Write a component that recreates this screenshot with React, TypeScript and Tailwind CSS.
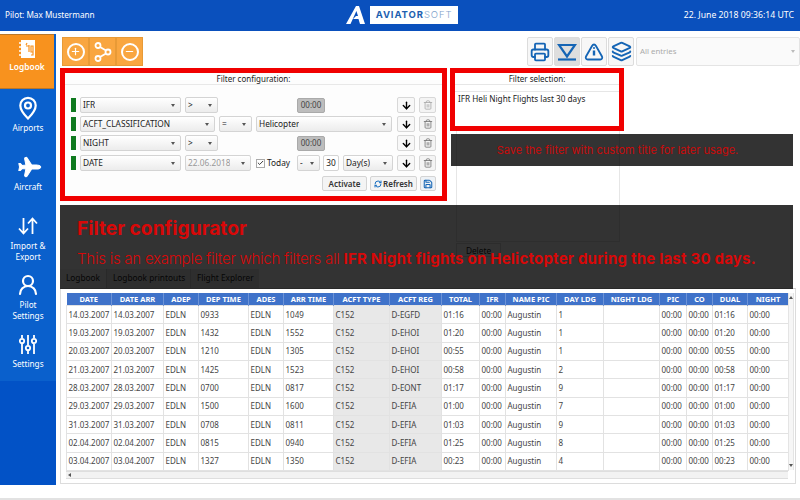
import React from "react";
import { Printer, Layers, Plus, Minus, ArrowDown, Trash2, Save, RefreshCw, Plane, UserRound, Check } from "lucide-react";

const cols: [string, string][] = [
  ["DATE", "w-[45px]"], ["DATE ARR", "w-[52px]"], ["ADEP", "w-[35px]"], ["DEP TIME", "w-[50px]"], ["ADES", "w-[35px]"],
  ["ARR TIME", "w-[50px]"], ["ACFT TYPE", "w-[56px]"], ["ACFT REG", "w-[52px]"], ["TOTAL", "w-[38px]"], ["IFR", "w-[26px]"],
  ["NAME PIC", "w-[51px]"], ["DAY LDG", "w-[47px]"], ["NIGHT LDG", "w-[56px]"], ["PIC", "w-[27px]"], ["CO", "w-[26px]"],
  ["DUAL", "w-[35px]"], ["NIGHT", "w-[41px]"],
];
const rows = [
  ["14.03.2007", "0933", "1049", "D-EGFD", "01:16", "1"],
  ["19.03.2007", "1432", "1552", "D-EHOI", "01:20", "1"],
  ["20.03.2007", "1210", "1305", "D-EHOI", "00:55", "1"],
  ["21.03.2007", "1425", "1523", "D-EHOI", "00:58", "2"],
  ["28.03.2007", "0700", "0817", "D-EONT", "01:17", "9"],
  ["29.03.2007", "1500", "1600", "D-EFIA", "01:00", "7"],
  ["31.03.2007", "0708", "0811", "D-EFIA", "01:03", "9"],
  ["02.04.2007", "0815", "0940", "D-EFIA", "01:25", "8"],
  ["03.04.2007", "1327", "1350", "D-EFIA", "00:23", "4"],
];

function Sel({ w, label, muted }: { w: string; label: string; muted?: boolean }) {
  return (
    <div className={`${w} h-[16px] shrink-0 flex items-center justify-between pl-[2px] pr-[5px] rounded-[2px] border border-[#d4d4d4] bg-gradient-to-b from-white to-[#ececec] text-[8.3px] ${muted ? "text-[#999]" : "text-[#222]"}`}>
      <span className="truncate">{label}</span>
      <span className="w-0 h-0 border-x-[2px] border-x-transparent border-t-[3px] border-t-[#555]" />
    </div>
  );
}
function RowBtns({ last }: { last?: boolean }) {
  return (
    <>
      <div className="w-[18px] h-[16px] shrink-0 ml-auto flex items-center justify-center rounded-[2px] border border-[#d8d8d8] bg-[#f8f8f8]">
        <ArrowDown size={11} strokeWidth={3} className="text-black" />
      </div>
      <div className="w-[17px] h-[16px] shrink-0 flex items-center justify-center rounded-[2px] border border-[#d8d8d8] bg-[#f4f4f4]">
        <Trash2 size={10} className={last ? "text-[#777]" : "text-[#aaa]"} />
      </div>
    </>
  );
}
const Green = () => <div className="w-[5px] h-[14px] bg-[#0f7a1f] shrink-0" />;
const Time = () => (
  <div className="w-[28px] h-[15px] shrink-0 flex items-center justify-center rounded-[2px] border border-[#aaa] bg-[#bdbdbd] text-[8px] text-[#444]">00:00</div>
);

function SideItem({ icon, label }: { icon: React.ReactNode; label: React.ReactNode }) {
  return (
    <div className="h-[59px] flex flex-col items-center justify-start text-white text-[8.2px] leading-[10.5px] text-center">
      <div className="h-[26px] flex items-center justify-center mb-[2px]">{icon}</div>
      {label}
    </div>
  );
}

function OrangeBtn({ children, w }: { children: React.ReactNode; w: string }) {
  return <div className={`${w} h-[29px] flex items-center justify-center bg-[#f9a640] border border-[#e89a36]`}>{children}</div>;
}
function ToolBtn({ children, active }: { children: React.ReactNode; active?: boolean }) {
  return <div className={`w-[26px] h-[29px] flex items-center justify-center rounded-[2px] border border-[#dcdcdc] ${active ? "bg-[#dedede]" : "bg-[#f7f7f7]"}`}>{children}</div>;
}

export default function App() {
  return (
    <div className="relative w-[800px] h-[500px] overflow-hidden bg-white font-['Noto_Sans',sans-serif] text-[#222]">
      <header className="h-[31px] bg-[#0a50bd] relative flex items-center justify-between pl-[5px] pr-[6px] text-white">
        <span className="text-[8.2px]">Pilot: Max Mustermann</span>
        <div className="absolute left-[346px] top-[6px] flex items-center gap-[5px]">
          <svg width="19" height="18" viewBox="0 0 19 18">
            <path d="M10 0h3l6 18h-5l-1.500-5H7l3-3h2l-1.600-5L4.500 18H0z" fill="white" />
          </svg>
          <div className="w-[88px] h-[18px] bg-white flex items-center justify-center text-[9.5px] tracking-[0.900px] font-['Inter',sans-serif] text-[#1d5fb0]">
            <b>AVIATOR</b><span className="font-light text-[#7fa3cc]">SOFT</span>
          </div>
        </div>
        <span className="text-[8.7px]">22. June 2018 09:36:14 UTC</span>
      </header>

      <div className="flex h-[469px]">
        <aside className="w-[56px] mt-[3px] h-[451px] flex flex-col bg-gradient-to-b from-[#0a60cc] from-[77%] to-[#0252c6] to-[77%]">
          <div className="w-[54px] h-[55px] bg-[#f8921e] border-y border-[#b9772a] flex flex-col items-center pt-[4px] text-white text-[8.4px] font-semibold">
            <svg width="18" height="20" viewBox="0 0 18 20" className="mb-[2px]">
              <path d="M3 1h14v18H3z" fill="white" />
              <path d="M1 4h4M1 8h4M1 12h4M1 16h4" stroke="white" strokeWidth="1.500" />
              <path d="M8 6l1-2M8 7h3M11 13V6M13 7h2v6h-2zM13 16h2v-3" stroke="#f8921e" strokeWidth="1.200" fill="none" />
            </svg>
            Logbook
          </div>
          <div className="h-[6px]" />
          <SideItem
            icon={
              <svg width="18" height="24" viewBox="0 0 18 24" fill="none" stroke="white" strokeWidth="2.200">
                <path d="M9 22.500C5 18.500 1.300 14 1.300 9.500a7.700 7.700 0 0 1 15.400 0C16.700 14 13 18.500 9 22.500z" />
                <circle cx="9" cy="9.500" r="3" />
              </svg>
            }
            label="Airports"
          />
          <SideItem icon={<Plane size={24} fill="white" strokeWidth={1} className="rotate-45" />} label="Aircraft" />
          <SideItem
            icon={
              <svg width="20" height="18" viewBox="0 0 20 18" fill="none" stroke="white" strokeWidth="1.800">
                <path d="M5.500 1v15M1 11.500l4.500 5 4.500-5M14.500 17V2M10 6.500l4.500-5 4.500 5" />
              </svg>
            }
            label={<>Import &amp;<br />Export</>}
          />
          <SideItem icon={<UserRound size={24} strokeWidth={2.200} />} label={<>Pilot<br />Settings</>} />
          <SideItem
            icon={
              <svg width="18" height="21" viewBox="0 0 18 21" fill="none" stroke="white" strokeWidth="1.800">
                <path d="M3 1v3M3 10v10M9 1v10M9 17v3M15 1v3M15 10v10" />
                <circle cx="3" cy="7" r="2.200" /><circle cx="9" cy="14" r="2.200" /><circle cx="15" cy="7" r="2.200" />
              </svg>
            }
            label="Settings"
          />
        </aside>

        <main className="flex-1 min-w-0 pl-[4px] flex flex-col relative">
          <div className="flex items-center h-[29px] mt-[6px] pl-[2px]">
            <div className="flex">
              <OrangeBtn w="w-[27px]">
                <div className="w-[18px] h-[18px] rounded-full border-2 border-white flex items-center justify-center"><Plus size={11} strokeWidth={2.500} className="text-white" /></div>
              </OrangeBtn>
              <OrangeBtn w="w-[27px]">
                <svg width="18" height="20" viewBox="0 0 18 20" fill="none" stroke="white" strokeWidth="1.800"><circle cx="4" cy="3.500" r="2.500" /><circle cx="4" cy="16.500" r="2.500" /><circle cx="14" cy="10" r="2.500" /><path d="M6 5l6 3.500M6 15l6-3.500" /></svg>
              </OrangeBtn>
              <OrangeBtn w="w-[27px]">
                <div className="w-[18px] h-[18px] rounded-full border-2 border-white flex items-center justify-center"><Minus size={11} strokeWidth={2.500} className="text-white" /></div>
              </OrangeBtn>
            </div>
            <div className="ml-auto flex gap-[1px]">
              <ToolBtn><Printer size={20} strokeWidth={2.200} className="text-[#1565b5]" /></ToolBtn>
              <ToolBtn active>
                <svg width="20" height="18" viewBox="0 0 20 18" fill="none" stroke="#1565b5" strokeWidth="2.200"><path d="M2 2h16L10 13.500z" /><path d="M1 16.500h18" /></svg>
              </ToolBtn>
              <ToolBtn>
                <svg width="20" height="18" viewBox="0 0 20 18" fill="none" stroke="#1565b5" strokeWidth="1.800"><path d="M10 1.500c1 0 1.500.6 2 1.500l6 10.500c.7 1.500-.1 3-1.700 3H3.700c-1.600 0-2.400-1.500-1.700-3L8 3c.5-.9 1-1.500 2-1.500z" /><path d="M10 7.500v5" strokeWidth="2.400" /><circle cx="10" cy="5" r="1" fill="#1565b5" stroke="none" /></svg>
              </ToolBtn>
              <ToolBtn><Layers size={21} strokeWidth={2.200} className="text-[#1565b5]" /></ToolBtn>
              <div className="w-[164px] h-[29px] ml-[1px] flex items-center justify-between pl-[3px] pr-[4px] border border-[#e4e4e4] rounded-[2px] bg-[#fafafa] text-[7.8px] text-[#aaa]">
                All entries
                <span className="w-0 h-0 border-x-[2px] border-x-transparent border-t-[3px] border-t-[#bbb]" />
              </div>
            </div>
          </div>

          <div className="flex mt-[2px] h-[137px]">
            <section className="w-[387px] h-[133px] border-[5px] border-[#f00000] bg-[#fdfdfd] px-[6px] flex flex-col">
              <div className="h-[12px] -mx-[6px] border-b border-[#e8e8e8] text-center text-[8px] leading-[11px]">Filter configuration:</div>
              <div className="flex flex-col pt-[12px] gap-[3px]">
                <div className="flex items-center h-[16px] gap-[4px]"><Green /><Sel w="w-[101px]" label="IFR" /><Sel w="w-[33px]" label=">" /><div className="w-[71px]" /><Time /><RowBtns /></div>
                <div className="flex items-center h-[16px] gap-[4px]"><Green /><Sel w="w-[135px]" label="ACFT_CLASSIFICATION" /><Sel w="w-[33px]" label="=" /><Sel w="w-[136px]" label="Helicopter" /><RowBtns last /></div>
                <div className="flex items-center h-[16px] gap-[4px]"><Green /><Sel w="w-[101px]" label="NIGHT" /><Sel w="w-[33px]" label=">" /><div className="w-[71px]" /><Time /><RowBtns last /></div>
                <div className="flex items-center h-[16px] gap-[4px] mt-[1px]">
                  <Green /><Sel w="w-[101px]" label="DATE" />
                  <Sel w="w-[66px]" label="22.06.2018" muted />
                  <div className="w-[9px] h-[9px] ml-[1px] border border-[#aaa] bg-white flex items-center justify-center"><Check size={8} strokeWidth={3} /></div>
                  <span className="text-[8.3px] -ml-[2px] w-[28px]">Today</span>
                  <Sel w="w-[23px]" label="-" />
                  <div className="w-[17px] h-[16px] -ml-[1px] border border-[#d4d4d4] rounded-[2px] bg-white text-[8.3px] flex items-center justify-center">30</div>
                  <Sel w="w-[50px]" label="Day(s)" />
                  <RowBtns last />
                </div>
              </div>
              <div className="flex justify-end items-center gap-[3px] mt-[5px]">
                <div className="w-[45px] h-[15px] flex items-center justify-center rounded-[2px] border border-[#d4d4d4] bg-[#f4f4f4] text-[8px] font-semibold text-[#333]">Activate</div>
                <div className="w-[47px] h-[15px] flex items-center justify-center gap-[1px] rounded-[2px] border border-[#d4d4d4] bg-[#f4f4f4] text-[8px] font-semibold text-[#333]"><RefreshCw size={8} strokeWidth={3} className="text-[#1a6fc0]" />Refresh</div>
                <div className="w-[16px] h-[15px] flex items-center justify-center rounded-[2px] border border-[#d4d4d4] bg-[#eef2f6]"><Save size={10} strokeWidth={2.500} className="text-[#1565b5]" /></div>
              </div>
            </section>
            <div className="w-[174px] ml-[3px] flex flex-col">
              <section className="h-[63px] border-[5px] border-[#f00000] bg-white">
                <div className="h-[12px] border-b border-[#e6e6e6] text-center text-[8px] leading-[11px]">Filter selection:</div>
                <div className="h-[7px] border-b border-[#e6e6e6]" />
                <div className="pl-[3px] pt-[1px] text-[8.2px] leading-[11px]">IFR Heli Night Flights last 30 days</div>
              </section>
              <div className="ml-[6px] mr-[4px] flex-1 border-x border-[#e6e6e6]" />
            </div>
          </div>

          <div className="h-[84px] flex flex-col -mt-[1px]">
            <div className="ml-[396px] w-[164px] h-[38px] border-x border-b border-[#e6e6e6]" />
            <div className="ml-[396px] mt-[1px] w-[45px] h-[14px] border border-[#ddd] text-[8.3px] text-center leading-[13px]">Delete</div>
            <div className="mt-auto h-[19px] flex text-[8.3px]">
              <div className="w-[46px] pl-[6px] leading-[18px] bg-[#f3f3f3]">Logbook</div>
              <div className="w-[84px] pl-[6px] leading-[18px] bg-[#e4e4e4] border-l border-[#ccc]">Logbook printouts</div>
              <div className="w-[69px] pl-[6px] leading-[18px] bg-[#e4e4e4] border-l border-[#ccc]">Flight Explorer</div>
            </div>
          </div>

          <div className="mr-[4px] h-[196px] border border-[#dcdcdc] border-t-[#ccc] pl-[5px] pr-[3px] pt-[4px] bg-white">
            <div className="flex h-[186px]">
              <div className="w-[722px] shrink-0 flex flex-col">
                <table className="table-fixed w-[722px] border-collapse">
                  <thead>
                    <tr className="h-[12px] bg-[#3f72c9]">
                      {cols.map(([c, w]) => (
                        <th key={c} className={`${w} p-0 leading-[12px] text-[7.5px] font-bold text-white text-center border-r border-[#6d93d6] whitespace-nowrap overflow-hidden`}>{c}</th>
                      ))}
                    </tr>
                  </thead>
                  <tbody className="text-[8px]">
                    {rows.map((r, i) => {
                      const cells = [r[0], r[0], "EDLN", r[1], "EDLN", r[2], "C152", r[3], r[4], "00:00", "Augustin", r[5], "", "00:00", "00:00", r[4], "00:00"];
                      return (
                        <tr key={i} className="h-[18.330px]">
                          {cells.map((c, j) => (
                            <td key={j} className={`p-0 pl-[1.500px] border border-[#e2e2e2] text-[#444] whitespace-nowrap overflow-hidden ${j === 6 || j === 7 ? "bg-[#e8e8e8]" : ""}`}>{c}</td>
                          ))}
                        </tr>
                      );
                    })}
                  </tbody>
                </table>
                <div className="h-[9px] bg-[#f2f2f2] border-y border-[#dedede] flex items-center pl-[2px]">
                  <span className="w-0 h-0 border-y-[2px] border-y-transparent border-r-[3px] border-r-[#555]" />
                </div>
              </div>
              <div className="w-[8px] flex flex-col items-center justify-between bg-[#f6f6f6] border-x border-[#e4e4e4] h-[177px] py-[3px]">
                <span className="w-0 h-0 border-x-[2px] border-x-transparent border-b-[3px] border-b-[#555]" />
                <span className="w-0 h-0 border-x-[2px] border-x-transparent border-t-[3px] border-t-[#555]" />
              </div>
            </div>
          </div>
        </main>
      </div>
      <div className="absolute left-0 right-0 top-[498px] h-[2px] bg-[#e2e2e2]" />

      {/* Tutorial overlays */}
      <div className="absolute left-[451px] top-[134px] w-[342px] h-[32px] bg-black/80 pr-[9px] flex items-center justify-center font-['Inter',sans-serif] text-[11px] text-[#c90a0a]">
        Save the filter with custom title for later usage.
      </div>
      <div className="absolute left-[60px] top-[205px] w-[733px] h-[84px] bg-black/80 pl-[17px] pt-[11px] font-['Inter',sans-serif] text-[#d80808]">
        <div className="text-[19.200px] leading-[24px] font-bold">Filter configurator</div>
        <div className="text-[15px] leading-[20px] mt-[9px] whitespace-nowrap font-light tracking-[-0.240px]">This is an example filter which filters all <b className="font-bold tracking-[0.220px]">IFR Night flights on Helictopter during the last 30 days.</b></div>
      </div>
    </div>
  );
}
